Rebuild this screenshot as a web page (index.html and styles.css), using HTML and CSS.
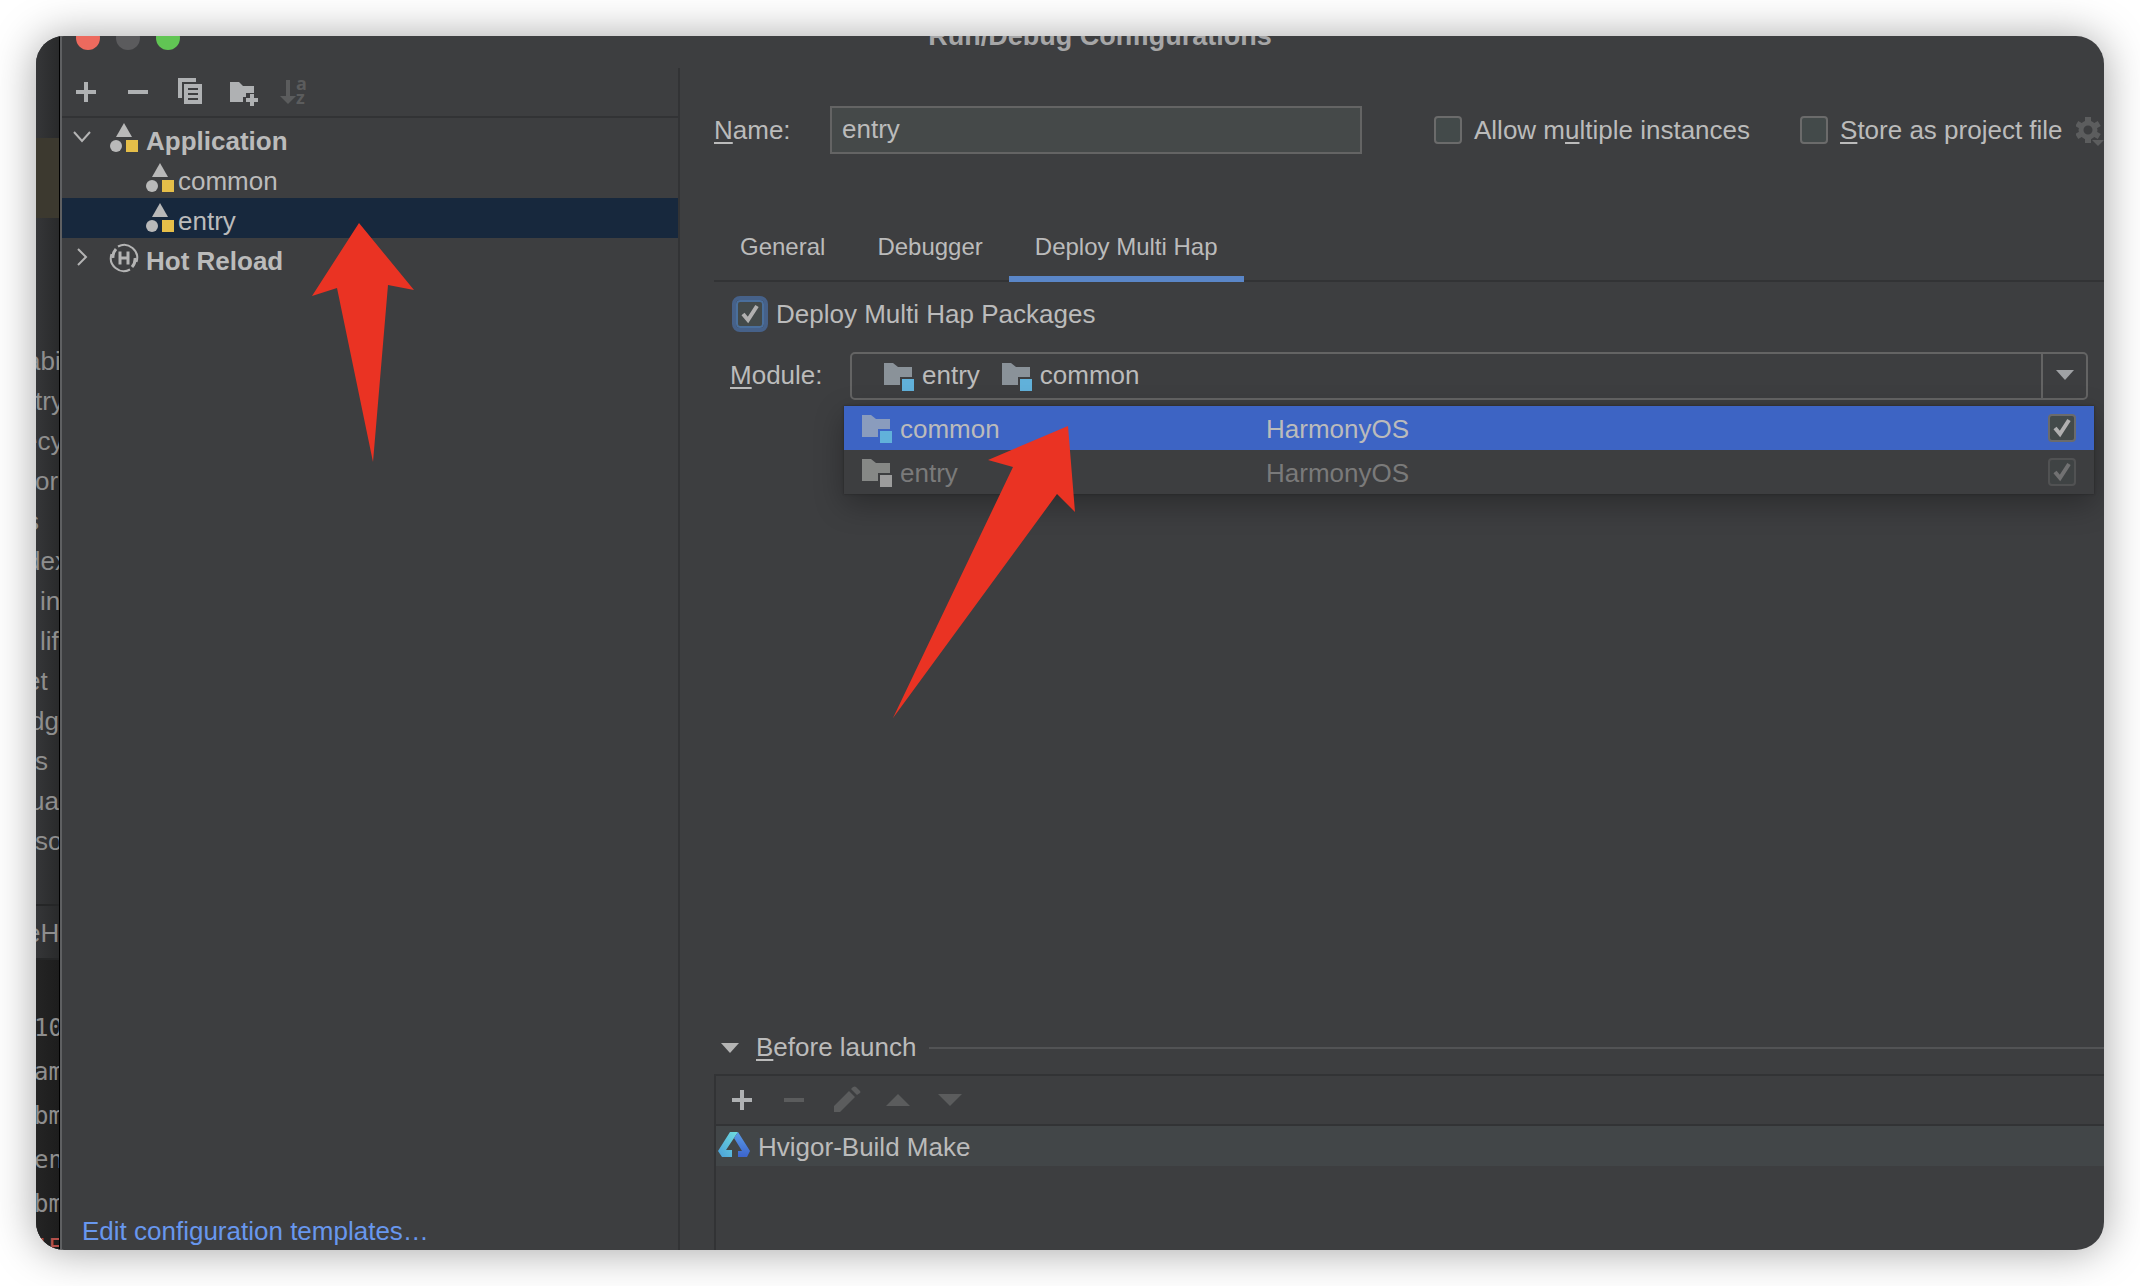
FILE: index.html
```html
<!DOCTYPE html>
<html lang="en">
<head>
<meta charset="utf-8">
<title>Run/Debug Configurations</title>
<link rel="stylesheet" href="styles.css">
</head>
<body>
<svg class="sprite" aria-hidden="true">
  <symbol id="app" viewBox="0 0 32 32">
    <path d="M16 1l8 14H8z" fill="#b9b9b9"/><circle cx="8" cy="24" r="6" fill="#b9b9b9"/>
    <path d="M18 18h12v12H18z" fill="#e5be49"/>
  </symbol>
  <symbol id="module" viewBox="0 0 32 32">
    <path d="M2 3h9l5 4h14v10H18v8H2z" fill="var(--folder, #8a9299)"/><path d="M20 19h12v12H20z" fill="var(--mark, #61b1da)"/>
  </symbol>
  <symbol id="plus" viewBox="0 0 32 32"><path d="M14 6h4v8h8v4h-8v8h-4v-8H6v-4h8z" fill="currentColor"/></symbol>
  <symbol id="minus" viewBox="0 0 32 32"><path d="M6 14h20v4H6z" fill="currentColor"/></symbol>
</svg>
<div class="shot">
  <aside class="editor" aria-hidden="true">
    <div class="editor-top"><div class="editor-band"></div></div>
    <ul class="words">
      <li class="in-b">abi</li>
      <li class="in-d">try</li>
      <li class="in-a">ecy</li>
      <li class="in-d">or</li>
      <li class="in-b">s</li>
      <li class="in-b">dex</li>
      <li class="in-e">in</li>
      <li class="in-e">lif</li>
      <li class="in-b">et</li>
      <li class="in-c">dg</li>
      <li class="in-d">s</li>
      <li class="in-c">ua</li>
      <li class="in-d">so</li>
    </ul>
    <div class="editor-tab in-b">eHa</div>
    <ul class="console">
      <li>10</li>
      <li>am</li>
      <li>bm</li>
      <li>en</li>
      <li>bm</li>
      <li class="error">1E</li>
    </ul>
  </aside>
  <main class="dialog">
    <header class="titlebar">
      <div class="lights"><i class="close"></i><i class="min"></i><i class="max"></i></div>
      <h1>Run/Debug Configurations</h1>
    </header>
    <div class="columns">
      <section class="side">
        <div class="toolbar">
          <button aria-label="Add"><svg><use href="#plus"/></svg></button>
          <button aria-label="Remove"><svg><use href="#minus"/></svg></button>
          <button aria-label="Copy"><svg viewBox="0 0 32 32" fill="currentColor"><path d="M4 2h18v4H8v16H4z"/><path fill-rule="evenodd" d="M10 8h18v20H10zM14 12v2h10v-2zM14 17v2h10v-2zM14 22v2h10v-2z"/></svg></button>
          <button aria-label="New folder"><svg viewBox="0 0 32 32" fill="currentColor"><path d="M4 6h9l4 4h11v7h-8v4h-3v5H4z"/><path d="M24 18h4v4h4v4h-4v4h-4v-4h-4v-4h4z"/></svg></button>
          <button aria-label="Sort" disabled><svg viewBox="0 0 32 32" fill="currentColor"><path d="M8 4h4v16h6l-8 8-8-8h6z"/><text x="18" y="14" class="az">a</text><text x="18" y="28" class="az">z</text></svg></button>
        </div>
        <ul class="tree">
          <li class="group"><svg class="chevron" viewBox="0 0 20 20"><path d="M2 5l8 9 8-9"/></svg><svg class="ico"><use href="#app"/></svg>Application</li>
          <li class="leaf"><svg class="ico"><use href="#app"/></svg>common</li>
          <li class="leaf selected"><svg class="ico"><use href="#app"/></svg>entry</li>
          <li class="group"><svg class="chevron" viewBox="0 0 20 20"><path d="M6 2l8 8-8 8"/></svg><svg class="ico" viewBox="0 0 32 32" fill="none" stroke="#b4b4b4"><path d="M10 4.500A13 13 0 0 1 28.500 20M22 27.500A13 13 0 0 1 3.500 12" stroke-width="2"/><path d="M5 16A12 12 0 0 1 8 7M27 16A12 12 0 0 1 24 25" stroke-width="3"/><path d="M12 9.500v13M20 9.500v13M12 16h8" stroke-width="3"/></svg>Hot Reload</li>
        </ul>
        <a class="templates" href="#">Edit configuration templates…</a>
      </section>
      <section class="form">
        <div class="name-row">
          <label for="name"><u>N</u>ame:</label>
          <input type="text" id="name" value="entry">
          <label class="check multi"><input type="checkbox">Allow m<u>u</u>ltiple instances</label>
          <label class="check"><input type="checkbox"><span><u>S</u>tore as project file</span></label>
          <svg class="gear" viewBox="0 0 28 32" fill="#5c5d5e">
            <circle cx="12" cy="16" r="7" fill="none" stroke="#5c5d5e" stroke-width="5"/>
            <path id="teeth" d="M9 3h6v5H9zM9 24h6v5H9z"/>
            <use href="#teeth" transform="rotate(60 12 16)"/><use href="#teeth" transform="rotate(120 12 16)"/>
            <path d="M16 26h12l-6 6z"/>
          </svg>
        </div>
        <nav class="tabs">
          <button>General</button><button>Debugger</button><button class="active">Deploy Multi Hap</button>
        </nav>
        <label class="check deploy"><input type="checkbox" checked>Deploy Multi Hap Packages</label>
        <div class="module-row">
          <span id="module-label"><u>M</u>odule:</span>
          <div class="combo">
            <button class="combo-box" aria-labelledby="module-label">
              <svg class="ico"><use href="#module"/></svg><span>entry</span>
              <svg class="ico"><use href="#module"/></svg><span>common</span>
              <span class="drop"><svg viewBox="0 0 20 12"><path d="M1 1h18l-9 10z" fill="#a0a2a5"/></svg></span>
            </button>
            <div class="popup">
              <label class="option current"><svg class="ico"><use href="#module"/></svg><span>common</span><span>HarmonyOS</span><input type="checkbox" checked></label>
              <label class="option off"><svg class="ico"><use href="#module"/></svg><span>entry</span><span>HarmonyOS</span><input type="checkbox" checked disabled></label>
            </div>
          </div>
        </div>
        <div class="before">
          <div class="before-title"><svg viewBox="0 0 20 12"><path d="M1 1h18l-9 10z" fill="#b4b4b4"/></svg><span><u>B</u>efore launch</span><hr></div>
          <div class="tasks">
            <div class="toolbar">
              <button aria-label="Add task"><svg><use href="#plus"/></svg></button>
              <button aria-label="Remove task" disabled><svg><use href="#minus"/></svg></button>
              <button aria-label="Edit task" disabled><svg viewBox="0 0 32 32" fill="currentColor"><path d="M4 22L19 7l6 6-15 15H4zM21 5l2-2q2-1 3 0l4 4q1 1 0 2l-3 2z"/></svg></button>
              <button aria-label="Move up" disabled><svg viewBox="0 0 32 32" fill="currentColor"><path d="M4 22h24L16 10z"/></svg></button>
              <button aria-label="Move down" disabled><svg viewBox="0 0 32 32" fill="currentColor"><path d="M4 10h24L16 22z"/></svg></button>
            </div>
            <div class="task">
              <svg class="ico" viewBox="0 0 32 32">
                <defs>
                  <linearGradient id="cyan" x1="0" y1="1" x2="1" y2="0"><stop offset="0" stop-color="#4a9fd8"/><stop offset="1" stop-color="#6fdde0"/></linearGradient>
                  <linearGradient id="blue" x1="0" y1="0" x2="0" y2="1"><stop offset="0" stop-color="#5b9de8"/><stop offset="1" stop-color="#3c64cc"/></linearGradient>
                </defs>
                <path d="M12 2h8L8 20h6v7H4l-4-6z" fill="url(#cyan)"/><path d="M20 2l12 19-3 6h-9v-6h4L16 8z" fill="url(#blue)"/>
              </svg><span>Hvigor-Build Make</span>
            </div>
          </div>
        </div>
      </section>
    </div>
  </main>
</div>
<svg class="arrows" aria-hidden="true" fill="#ea3323">
  <path d="M359 223L414 290 388 285 373 462 337 288 312 296z"/>
  <path d="M1068 426L1075 512 1057 494 893 718 1013 467 988 460z"/>
</svg>
</body>
</html>
```
FILE: styles.css
```css
* { box-sizing: border-box; }
body {
  margin: 0;
  min-height: 100vh;
  padding: 36px;
  display: flex;
  background: #fff;
  color: #bbb;
  font: 26px/40px "Liberation Sans", Arial, sans-serif;
}
ul { list-style: none; margin: 0; padding: 0; }
button { font: inherit; color: inherit; background: none; border: 0; padding: 0; }
u { text-decoration-thickness: 2px; text-underline-offset: 3px; }
svg { flex: none; }
.sprite { position: absolute; width: 0; height: 0; }
.arrows { position: absolute; top: 0; left: 0; width: 1200px; height: 800px; pointer-events: none; }

.shot {
  flex: 1;
  display: flex;
  border-radius: 28px;
  overflow: hidden;
  background: #3d3e40;
  box-shadow: 0 1px 44px rgba(0, 0, 0, .36);
}

/* Sliver of the editor behind the dialog */
.editor {
  width: 24px;
  overflow: hidden;
  white-space: nowrap;
  color: #8e8e8e;
  background: linear-gradient(90deg, #353638, #292a2b);
  border-right: 1px solid #000;
  display: flex;
  flex-direction: column;
}
.editor-top { height: 305px; padding-top: 102px; }
.editor-band { height: 80px; background: #3c392f; }
.words { height: 563px; }
.in-a { text-indent: -13px; }
.in-b { text-indent: -10px; }
.in-c { text-indent: -6px; }
.in-d { text-indent: -1px; }
.in-e { text-indent: 4px; }
.editor-tab { height: 56px; padding-top: 7px; border: solid #252627; border-width: 2px 0; }
.console {
  flex: 1 1 0;
  min-height: 0;
  overflow: hidden;
  padding-top: 46px;
  background: linear-gradient(90deg, #242424, #1d1d1d);
  font: 24px/44px "DejaVu Sans Mono", monospace;
  text-indent: -2px;
}
.error { color: #b5504a; }

.dialog { flex: 1; min-width: 0; display: flex; flex-direction: column; border-left: 2px solid #5f6062; }
.titlebar { height: 32px; position: relative; overflow: hidden; padding-left: 34px; }
.titlebar h1 { margin: -20px 0 0; font-size: 27px; line-height: 40px; text-align: center; color: #a6a6a7; }
.lights { position: absolute; left: 14px; top: -10px; display: flex; gap: 16px; }
.lights i { width: 24px; height: 24px; border-radius: 50%; }
.close { background: #ed6a5e; }
.min { background: #5b5b5d; }
.max { background: #61c554; }

.columns { flex: 1; display: flex; min-height: 0; }
.side { width: 618px; display: flex; flex-direction: column; border-right: 2px solid #323335; }
.toolbar { height: 50px; display: flex; align-items: center; gap: 20px; padding-left: 8px; border-bottom: 2px solid #323335; color: #afb1b3; }
.toolbar button, .toolbar svg { display: block; width: 32px; height: 32px; }
.toolbar button:disabled { color: #5b5c5d; }
.az { font: 700 18px "Open Sans", sans-serif; }
.tree { flex: 1; }
.tree li { height: 40px; display: flex; align-items: center; padding-top: 6px; }
.tree .group { font-weight: 700; padding-left: 10px; }
.tree .leaf { padding-left: 82px; }
.tree .selected { background: #17283d; }
.ico { width: 32px; height: 32px; }
.tree .ico { margin-bottom: 6px; }
.tree .group .ico { margin-right: 6px; }
.tree .leaf .ico { margin-right: 2px; }
.chevron { width: 20px; height: 20px; margin: 0 16px 8px 0; fill: none; stroke: #b4b4b4; stroke-width: 2; }
.templates { color: #6897ee; text-decoration: none; padding: 0 20px; line-height: 38px; }

.form { flex: 1; min-width: 0; display: flex; flex-direction: column; padding-left: 34px; }
.name-row { display: flex; align-items: center; margin-top: 38px; height: 48px; }
.name-row > label:first-child { width: 116px; }
.name-row input[type=text] { width: 532px; height: 48px; padding: 0 10px 2px; font: inherit; color: inherit; background: #454949; border: 2px solid #646464; }
.check { display: flex; align-items: center; white-space: pre; line-height: 42px; }
input[type=checkbox] {
  appearance: none;
  flex: none;
  width: 28px;
  height: 28px;
  margin: 0 12px 0 0;
  border: 2px solid #6b6b6b;
  border-radius: 4px;
  background: #434a4a center / 24px no-repeat;
}
input[type=checkbox]:checked { background-image: url("data:image/svg+xml,%3Csvg xmlns='http://www.w3.org/2000/svg' viewBox='0 0 24 24'%3E%3Cpath d='M5 12l5 6 9-14' fill='none' stroke='%23b0b0b0' stroke-width='4'/%3E%3C/svg%3E"); }
.multi { margin: 0 50px 0 72px; }
.gear { width: 28px; height: 32px; margin-left: auto; }

.tabs { display: flex; margin-top: 76px; height: 52px; border-bottom: 2px solid #323335; font-size: 24px; }
.tabs button { height: 52px; padding: 0 26px 18px; line-height: 32px; }
.tabs .active { border-bottom: 6px solid #5a86c8; padding-bottom: 12px; }
.deploy { margin: 12px 0 0 22px; height: 40px; }
.deploy input[type=checkbox] { border-color: #4a6f9c; outline: 4px solid #466189; }
.module-row { display: flex; margin: 18px 16px 0 16px; }
.module-row > span { width: 120px; line-height: 46px; }
.combo { flex: 1; position: relative; }
.combo-box { width: 100%; height: 48px; display: flex; align-items: center; padding-left: 30px; border: 2px solid #646464; border-radius: 5px; }
.combo-box .ico { margin-right: 8px; }
.combo-box span { margin-right: 20px; padding-bottom: 2px; }
.combo-box .drop { margin: 0 0 0 auto; width: 45px; height: 44px; border-left: 2px solid #646464; display: flex; align-items: center; justify-content: center; }
.drop svg, .before-title svg { width: 20px; height: 12px; }
.popup { position: absolute; top: 54px; left: -6px; right: -6px; background: #3d3e40; box-shadow: 0 0 2px #222, 0 10px 30px rgba(0, 0, 0, .3); }
.option { height: 44px; display: grid; grid-template-columns: 32px 358px 1fr 28px; column-gap: 8px; align-items: center; padding: 0 18px 0 16px; }
.option span, .task span { padding-top: 2px; }
.option input[type=checkbox] { margin: 0; }
.current { background: #3d64c4; --folder: #8a9cbd; }
.off { color: #7a7a7a; --folder: #868886; --mark: #9c9c9c; }
.off input { opacity: .45; }

.before { margin-top: auto; }
.before-title { display: flex; align-items: center; height: 40px; margin-left: 6px; }
.before-title span { margin: 0 13px 0 16px; padding-bottom: 2px; }
.before-title hr { flex: 1; margin: 0; border: 0; border-top: 2px solid #525355; }
.tasks { margin-top: 6px; min-height: 176px; border: solid #323335; border-width: 2px 0 0 2px; }
.tasks .toolbar { padding-left: 10px; }
.task { height: 40px; display: flex; align-items: center; gap: 8px; padding-left: 2px; background: #424648; }
```
